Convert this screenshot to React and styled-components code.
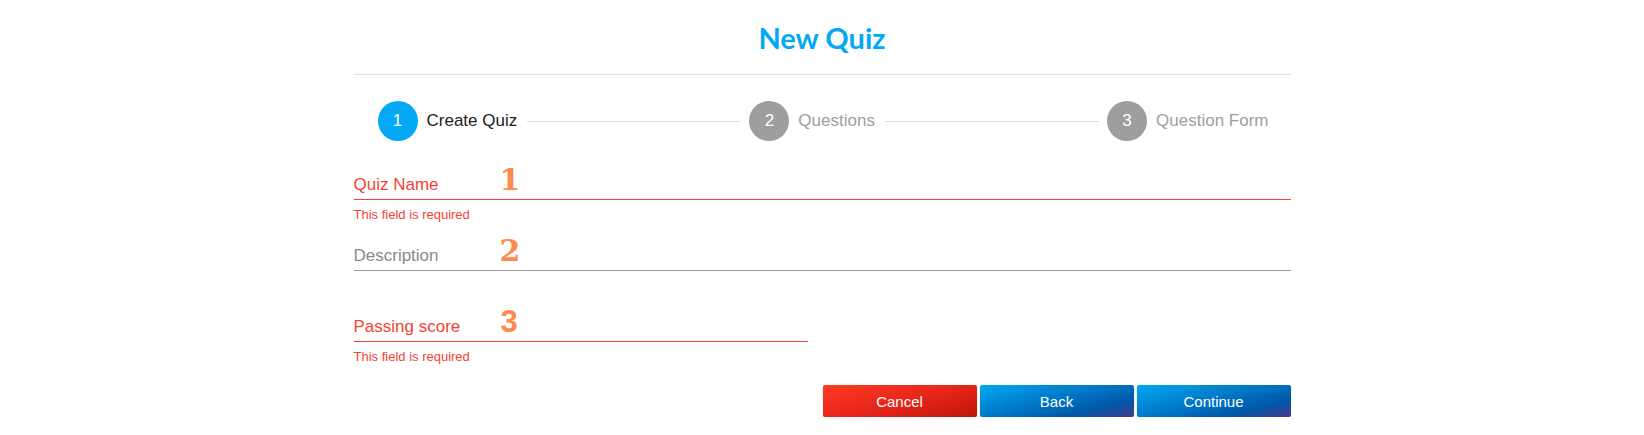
import React from "react";
import styled, { createGlobalStyle } from "styled-components";

const GlobalStyle = createGlobalStyle`
  body {
    margin: 0;
    background: #fff;
    font-family: "Liberation Sans", Arial, sans-serif;
  }
`;

const Page = styled.div`
  width: 937px;
  margin: 0 auto;
`;

const Header = styled.div`
  padding: 21px 0 19px;
  border-bottom: 1px solid #e0e0e0;
  text-align: center;

  h1 {
    margin: 0;
    font-family: Lato, "Liberation Sans", sans-serif;
    font-weight: 700;
    font-size: 29px;
    line-height: 34px;
    color: #03a9f4;
  }
`;

const Stepper = styled.div`
  display: flex;
  align-items: center;
  padding: 26px 22px 10px 24px;
`;

const Step = styled.div`
  display: flex;
  align-items: center;
`;

const Circle = styled.div`
  width: 40px;
  height: 40px;
  border-radius: 50%;
  background: ${(p) => (p.$active ? "#03a9f4" : "#9e9e9e")};
  color: #fff;
  font-size: 17px;
  display: flex;
  align-items: center;
  justify-content: center;
`;

const StepLabel = styled.span`
  margin-left: 9px;
  font-size: 17px;
  color: ${(p) => (p.$active ? "#212121" : "#9e9e9e")};
`;

const Connector = styled.div`
  flex: 1;
  height: 1px;
  background: #e0e0e0;
  margin: 0 8px 0 10px;
`;

const Field = styled.div`
  width: ${(p) => p.$width || "100%"};
`;

const InputRow = styled.div`
  height: 49px;
  display: flex;
  flex-direction: column;
  justify-content: flex-end;
  padding-bottom: 4px;
  box-sizing: border-box;
  border-bottom: 1px solid ${(p) => (p.$error ? "#f44336" : "#9e9e9e")};
`;

const LabelLine = styled.div`
  display: flex;
  align-items: baseline;
`;

const Label = styled.span`
  width: 146px;
  font-size: 17px;
  line-height: 20px;
  color: ${(p) => (p.$error ? "#f44336" : "#8a8a8a")};
`;

const Marker = styled.span`
  font-family: ${(p) =>
    p.$sans ? '"Liberation Sans", Arial, sans-serif' : '"DejaVu Serif", serif'};
  font-weight: 700;
  font-size: ${(p) => (p.$sans ? "31px" : "30px")};
  margin-left: ${(p) => (p.$sans ? "1px" : "0")};
  line-height: 0;
  color: #ff8a4c;
`;

const Helper = styled.div`
  height: 22px;
  padding-top: 7px;
  box-sizing: border-box;
  font-size: 13px;
  line-height: 15px;
  color: #f44336;
`;

const ButtonBar = styled.div`
  display: flex;
  justify-content: flex-end;
  gap: 3px;
  margin-top: 21px;
`;

const Button = styled.button`
  width: 154px;
  height: 32px;
  border: none;
  border-radius: 2px;
  color: #fff;
  font-family: "Liberation Sans", Arial, sans-serif;
  font-size: 15px;
  cursor: pointer;
  box-shadow: 0 1px 2px rgba(0, 0, 0, 0.15);
  background: ${(p) =>
    p.$variant === "cancel"
      ? "linear-gradient(165deg, #ff3b24 0%, #e8261a 50%, #c0140b 100%)"
      : "linear-gradient(165deg, #00a9f0 0%, #0078c8 45%, #0058a8 75%, #443a8a 100%)"};
`;

const steps = [
  { n: 1, label: "Create Quiz", active: true },
  { n: 2, label: "Questions" },
  { n: 3, label: "Question Form" },
];

const fields = [
  { label: "Quiz Name", marker: "1", error: true },
  { label: "Description", marker: "2" },
  { label: "Passing score", marker: "3", error: true, sans: true, width: "454px" },
];

export default function App() {
  return (
    <Page>
      <GlobalStyle />
      <Header>
        <h1>New Quiz</h1>
      </Header>
      <Stepper>
        {steps.map((s, i) => (
          <React.Fragment key={s.n}>
            {i > 0 && <Connector />}
            <Step>
              <Circle $active={s.active}>{s.n}</Circle>
              <StepLabel $active={s.active}>{s.label}</StepLabel>
            </Step>
          </React.Fragment>
        ))}
      </Stepper>
      {fields.map((f) => (
        <Field key={f.label} $width={f.width}>
          <InputRow $error={f.error}>
            <LabelLine>
              <Label $error={f.error}>{f.label}</Label>
              <Marker $sans={f.sans}>{f.marker}</Marker>
            </LabelLine>
          </InputRow>
          <Helper>{f.error ? "This field is required" : ""}</Helper>
        </Field>
      ))}
      <ButtonBar>
        <Button $variant="cancel">Cancel</Button>
        <Button>Back</Button>
        <Button>Continue</Button>
      </ButtonBar>
    </Page>
  );
}
